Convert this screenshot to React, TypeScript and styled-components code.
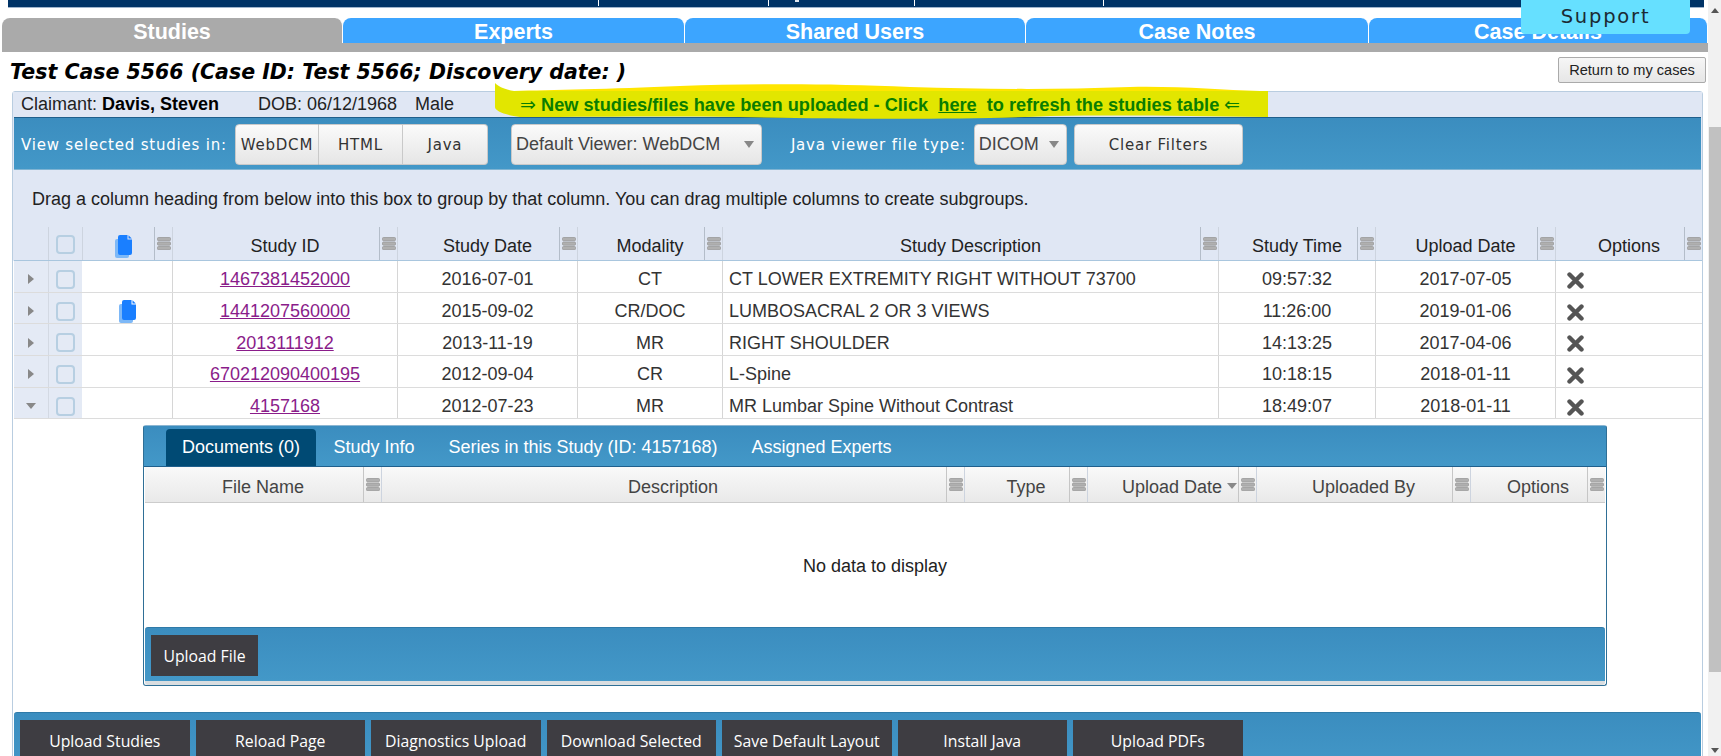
import React from 'react';
import styled, { createGlobalStyle } from 'styled-components';

const Global = createGlobalStyle`
  html, body { margin: 0; padding: 0; height: 756px; overflow: hidden; background: #fff; }
  body { font-family: "Liberation Sans", Arial, sans-serif; color: #222; }
  #root { height: 756px; }
`;

const Page = styled.div`
  position: relative;
  display: flex;
  width: 1721px;
  height: 756px;
  overflow: hidden;
`;
const Main = styled.main`
  width: 1708px;
  flex: none;
`;
const TopBar = styled.nav`
  display: flex;
  height: 7px;
  margin: 0 4px 0 8px;
  background: #003366;
  border-bottom: 1px solid #9fb4cc;
  overflow: hidden;
`;
const TopCell = styled.div<{ $w: number; $mark?: number }>`
  position: relative;
  width: ${p => p.$w}px;
  height: 6px;
  flex: none;
  border-right: 1px solid #fff;
  box-sizing: border-box;
  &::after {
    content: '';
    display: ${p => (p.$mark ? 'block' : 'none')};
    position: absolute;
    left: ${p => p.$mark}px;
    top: 0;
    width: 4px;
    height: 2px;
    background: #dfe7f0;
  }
`;
const TopRest = styled.div`flex: 1;`;

const TabStrip = styled.div`
  margin: 10px 0 0 2px;
  height: 34px;
  width: 1706px;
  background: linear-gradient(#fff 0 25px, #aaa 25px);
  display: flex;
`;
const Tab = styled.div<{ $active?: boolean; $w: number }>`
  width: ${p => p.$w}px;
  height: 25px;
  flex: none;
  box-sizing: border-box;
  border-radius: 8px 8px 0 0;
  border-right: 1px solid #fff;
  background: ${p => (p.$active ? '#aaaaaa' : '#3ca5ff')};
  color: #fff;
  font-weight: 700;
  font-size: 21.5px;
  line-height: 28px;
  text-align: center;
`;

const TitleRow = styled.div`
  display: flex;
  justify-content: space-between;
  align-items: flex-start;
  padding: 5px 2px 8px 10px;
  height: 26px;
`;
const Title = styled.h1`
  margin: 3px 0 0;
  font-family: "DejaVu Sans", sans-serif;
  font-style: italic;
  font-weight: 700;
  font-size: 20.5px;
  line-height: 24px;
  color: #000;
`;
const ReturnButton = styled.button`
  width: 148px;
  height: 26px;
  padding: 0;
  border: 1px solid #aaa;
  border-radius: 2px;
  background: linear-gradient(#f6f6f6, #e6e6e6);
  font-family: "Liberation Sans", sans-serif;
  font-size: 14.6px;
  color: #222;
`;

const Panel = styled.section`
  margin: 0 5px 0 12px;
  width: 1691px;
  box-sizing: border-box;
  background: #fff;
  border: 1px solid #b9cde0;
  border-radius: 3px 3px 0 0;
  padding: 0 0 0 1px;
`;
const PanelTop = styled.div`
  margin-left: -1px;
  background: #e0e7f4;
`;
const InfoRow = styled.div`
  display: flex;
  align-items: center;
  height: 25px;
  padding-left: 8px;
  font-size: 18px;
  color: #222;
  b { color: #000; font-weight: 700; }
`;
const InfoItem = styled.span<{ $w: number }>`
  width: ${p => p.$w}px;
  flex: none;
  white-space: nowrap;
`;
const Notice = styled.span`
  position: relative;
  z-index: 1;
  font-weight: 700;
  color: #0a7d00;
  white-space: pre;
  font-size: 18.2px;
  a { color: #0a7d00; text-decoration: underline; }
`;
const NoticeArrow = styled.span`
  font-weight: 400;
  font-size: 19px;
`;

const Toolbar = styled.div`
  display: flex;
  align-items: center;
  height: 53px;
  box-sizing: border-box;
  margin: 0 1px;
  padding: 2px 0 0 7px;
  background: linear-gradient(#3b8dbf, #4398c8);
  border-top: 1px solid #1f5f8c;
  border-bottom: 1px solid #7fb4d3;
  color: #fff;
  font-family: "DejaVu Sans", sans-serif;
  font-size: 15px;
  letter-spacing: 0.8px;
`;
const ToolLabel = styled.span<{ $ml?: number }>`
  margin-left: ${p => p.$ml ?? 0}px;
  white-space: nowrap;
`;
const Segments = styled.div`
  display: flex;
  margin-left: 8px;
`;
const Segment = styled.button<{ $w: number }>`
  width: ${p => p.$w}px;
  height: 41px;
  padding: 0;
  border: 1px solid #c9c9c9;
  border-left-width: 0;
  background: linear-gradient(#fafafa, #e6e6e6);
  font-family: "DejaVu Sans", sans-serif;
  font-size: 15px;
  letter-spacing: 0.8px;
  color: #333;
  &:first-child { border-left-width: 1px; border-radius: 4px 0 0 4px; }
  &:last-child { border-radius: 0 4px 4px 0; }
`;
const Select = styled.div<{ $w: number; $ml: number }>`
  display: flex;
  align-items: center;
  justify-content: space-between;
  width: ${p => p.$w}px;
  margin-left: ${p => p.$ml}px;
  height: 41px;
  box-sizing: border-box;
  padding: 0 7px 0 4px;
  border: 1px solid #c9c9c9;
  border-radius: 4px;
  background: linear-gradient(#fafafa, #e6e6e6);
  font-family: "Liberation Sans", sans-serif;
  font-size: 18px;
  letter-spacing: 0;
  color: #444;
  white-space: nowrap;
  &::after {
    content: '';
    border-left: 5.5px solid transparent;
    border-right: 5.5px solid transparent;
    border-top: 7px solid #888;
  }
`;
const ClearButton = styled.button`
  width: 169px;
  height: 41px;
  margin-left: 7px;
  padding: 0;
  border: 1px solid #c9c9c9;
  border-radius: 4px;
  background: linear-gradient(#fafafa, #e6e6e6);
  font-family: "DejaVu Sans", sans-serif;
  font-size: 15px;
  letter-spacing: 0.8px;
  color: #333;
`;
const GroupHint = styled.div`
  height: 57px;
  box-sizing: border-box;
  padding: 19px 0 0 19px;
  font-size: 18px;
  line-height: 20px;
  color: #222;
  white-space: nowrap;
`;

const COLS = '34px 34px 90px 225px 180px 145px 496px 157px 180px 147px';
const HeadRow = styled.div`
  display: grid;
  grid-template-columns: ${COLS};
  height: 34px;
  box-sizing: border-box;
  margin-left: 1px;
  border-bottom: 1px solid #a9c6de;
  font-size: 18px;
  color: #222;
`;
const HeadCell = styled.div`
  position: relative;
  display: flex;
  align-items: center;
  justify-content: center;
  box-sizing: border-box;
  padding-top: 5px;
  & + & { border-left: 1px solid #cdd4df; }
`;
const GripBox = styled.span`
  position: absolute;
  right: 0;
  top: 0;
  bottom: 0;
  width: 18px;
  display: flex;
  align-items: center;
  justify-content: center;
  border-left: 1px solid #b4bdc9;
  box-sizing: border-box;
`;
const NestedGripBox = styled(GripBox)`
  border-left-color: #c6c6c6;
`;

const Row = styled.div`
  display: grid;
  grid-template-columns: ${COLS};
  height: 31.7px;
  box-sizing: border-box;
  background: #fff;
  border-bottom: 1px solid #dcdcdc;
  font-size: 18px;
  color: #333;
  &:last-of-type { border-bottom: 0; }
`;
const Cell = styled.div<{ $left?: boolean }>`
  display: flex;
  align-items: center;
  justify-content: ${p => (p.$left ? 'flex-start' : 'center')};
  padding: 7px 0 0 ${p => (p.$left ? '6px' : '0')};
  border-left: 1px solid #d6d6d6;
  box-sizing: border-box;
  white-space: nowrap;
  a { color: #8a1c8a; text-decoration: underline; }
`;
const SideCell = styled.div<{ $first?: boolean }>`
  display: flex;
  align-items: center;
  justify-content: center;
  padding-top: 6px;
  box-sizing: border-box;
  background: #e4eaf5;
  ${p => (p.$first ? '' : 'border-left: 1px solid #d3d9e3;')}
`;
const FileCell = styled.div`
  display: flex;
  align-items: center;
  justify-content: center;
  padding-top: 7px;
  box-sizing: border-box;
`;
const OptionCell = styled(Cell)`
  justify-content: flex-start;
  padding: 8px 0 0 11px;
`;
const Check = styled.span`
  width: 19px;
  height: 19px;
  box-sizing: border-box;
  border: 2px solid #b7cfe2;
  border-radius: 4px;
  background: transparent;
`;
const HeadCheck = styled(Check)`
  margin-top: -4px;
`;
const Expander = styled.span<{ $open?: boolean }>`
  width: 0;
  height: 0;
  ${p =>
    p.$open
      ? `border-left: 5.5px solid transparent; border-right: 5.5px solid transparent; border-top: 6px solid #888;`
      : `border-top: 5.5px solid transparent; border-bottom: 5.5px solid transparent; border-left: 6px solid #888;`}
`;
const HeadFile = styled.span`
  display: flex;
  margin-right: 9px;
`;

const Detail = styled.div`
  margin: 6px 0 0 129px;
  width: 1464px;
  height: 261px;
  box-sizing: border-box;
  border: 1px solid #2f6f96;
  border-top-color: #8cb6d2;
  border-radius: 3px;
  background: #fff;
  padding: 0 1px 0 1px;
  display: flex;
  flex-direction: column;
`;
const DetailTabs = styled.div`
  display: flex;
  align-items: flex-end;
  height: 41px;
  flex: none;
  margin: 0 -1px;
  padding-left: 22px;
  background: linear-gradient(#3b8dbf, #4398c8);
  border-bottom: 1px solid #1f5f8c;
  box-sizing: border-box;
  font-size: 18px;
  color: #fff;
`;
const DetailTab = styled.div<{ $active?: boolean; $w: number }>`
  width: ${p => p.$w}px;
  height: 37px;
  line-height: 37px;
  text-align: center;
  white-space: nowrap;
  border-radius: 4px 4px 0 0;
  background: ${p => (p.$active ? '#004a74' : 'transparent')};
`;
const DetailHead = styled.div`
  display: grid;
  grid-template-columns: 236px 583px 123px 169px 214px 135px;
  height: 36px;
  flex: none;
  box-sizing: border-box;
  border-bottom: 1px solid #ccc;
  background: linear-gradient(#f9f9f9, #e9e9e9);
  font-size: 18px;
  color: #444;
`;
const SortArrow = styled.span`
  position: absolute;
  right: 19px;
  top: 16px;
  border-left: 5px solid transparent;
  border-right: 5px solid transparent;
  border-top: 6px solid #888;
`;
const Empty = styled.div`
  flex: 1;
  display: flex;
  align-items: center;
  justify-content: center;
  font-size: 18px;
  color: #222;
  padding-top: 3px;
`;
const DetailFoot = styled.div`
  height: 58px;
  flex: none;
  box-sizing: border-box;
  padding: 7px 0 0 6px;
  background: linear-gradient(#3b8dbf, #4398c8);
  border-top: 1px solid #2f7aa8;
  border-bottom: 4px solid #d9dde0;
  border-radius: 3px;
`;
const DarkButton = styled.button<{ $w: number }>`
  width: ${p => p.$w}px;
  height: 41px;
  padding: 0;
  border: 0;
  background: #3e3d42;
  color: #fff;
  font-family: "Open Sans", sans-serif;
  font-size: 15.8px;
  white-space: nowrap;
  flex: none;
`;
const BottomBar = styled.div`
  display: flex;
  gap: 6px;
  margin: 26px 1px 0 0;
  height: 60px;
  box-sizing: border-box;
  padding: 7px 0 0 6px;
  background: linear-gradient(#3b8dbf, #4398c8);
  border-top: 1px solid #2f7aa8;
  border-radius: 3px 3px 0 0;
`;

const Highlight = styled.svg`
  position: absolute;
  left: 490px;
  top: 80px;
  pointer-events: none;
`;
const Support = styled.div`
  position: absolute;
  left: 1521px;
  top: 0;
  width: 169px;
  height: 34px;
  background: #66e0ff;
  border-radius: 0 0 4px 4px;
  color: #1b2a33;
  font-family: "DejaVu Sans", sans-serif;
  font-size: 19.5px;
  letter-spacing: 1.8px;
  line-height: 34px;
  text-align: center;
`;
const Scrollbar = styled.div`
  position: relative;
  width: 13px;
  flex: none;
  background: #f1f1f1;
`;
const ScrollThumb = styled.div`
  position: absolute;
  left: 1px;
  right: 0;
  top: 127px;
  height: 545px;
  background: #c1c1c1;
`;
const ScrollArrow = styled.span<{ $down?: boolean }>`
  position: absolute;
  left: 3px;
  ${p => (p.$down ? 'bottom: 3px;' : 'top: 8px;')}
  border-left: 4px solid transparent;
  border-right: 4px solid transparent;
  ${p => (p.$down ? 'border-top: 5px solid #555;' : 'border-bottom: 5px solid #555;')}
`;

const Grip = () => (
  <svg width="14" height="13" viewBox="0 0 14 13">
    {[0, 4.5, 9].map(y => (
      <rect key={y} x="0.5" y={y + 0.5} width="13" height="3.2" rx="1" fill="#b0b0b0" stroke="#999" strokeWidth="0.8" />
    ))}
  </svg>
);
const FileIcon = () => (
  <svg width="17" height="23" viewBox="0 0 17 23">
    <path d="M0 6a2 2 0 0 1 2-2h8l4 4v13a2 2 0 0 1-2 2H2a2 2 0 0 1-2-2z" fill="#7db8f7" />
    <path d="M3 2a2 2 0 0 1 2-2h7.5v4.5H17V18a2 2 0 0 1-2 2H5a2 2 0 0 1-2-2z" fill="#1a7fff" />
    <path d="M13.5 0.3L16.8 3.6H13.5z" fill="#1a7fff" />
  </svg>
);
const CloseIcon = () => (
  <svg width="17" height="17" viewBox="0 0 17 17">
    <path d="M2.5 2.5L14.5 14.5M14.5 2.5L2.5 14.5" stroke="#555" strokeWidth="4.4" strokeLinecap="round" />
  </svg>
);

const rows = [
  { id: '1467381452000', date: '2016-07-01', mod: 'CT', desc: 'CT LOWER EXTREMITY RIGHT WITHOUT 73700', time: '09:57:32', up: '2017-07-05' },
  { id: '1441207560000', date: '2015-09-02', mod: 'CR/DOC', desc: 'LUMBOSACRAL 2 OR 3 VIEWS', time: '11:26:00', up: '2019-01-06', file: true },
  { id: '2013111912', date: '2013-11-19', mod: 'MR', desc: 'RIGHT SHOULDER', time: '14:13:25', up: '2017-04-06' },
  { id: '670212090400195', date: '2012-09-04', mod: 'CR', desc: 'L-Spine', time: '10:18:15', up: '2018-01-11' },
  { id: '4157168', date: '2012-07-23', mod: 'MR', desc: 'MR Lumbar Spine Without Contrast', time: '18:49:07', up: '2018-01-11', open: true },
];
const heads = ['Study ID', 'Study Date', 'Modality', 'Study Description', 'Study Time', 'Upload Date', 'Options'];
const detailHeads = ['File Name', 'Description', 'Type', 'Upload Date', 'Uploaded By', 'Options'];
const detailTabs = [
  { t: 'Documents (0)', w: 150, active: true },
  { t: 'Study Info', w: 116 },
  { t: 'Series in this Study (ID: 4157168)', w: 302 },
  { t: 'Assigned Experts', w: 175 },
];
const actions = ['Upload Studies', 'Reload Page', 'Diagnostics Upload', 'Download Selected', 'Save Default Layout', 'Install Java', 'Upload PDFs'];

export default function App() {
  return (
    <Page>
      <Global />
      <Main>
        <TopBar>
          <TopCell $w={591} />
          <TopCell $w={170} />
          <TopCell $w={146} $mark={26} />
          <TopCell $w={189} />
          <TopRest />
        </TopBar>
        <TabStrip>
          <Tab $active $w={341}>Studies</Tab>
          <Tab $w={342}>Experts</Tab>
          <Tab $w={341}>Shared Users</Tab>
          <Tab $w={343}>Case Notes</Tab>
          <Tab $w={339}>Case Details</Tab>
        </TabStrip>
        <TitleRow>
          <Title>Test Case 5566 (Case ID: Test 5566; Discovery date: )</Title>
          <ReturnButton>Return to my cases</ReturnButton>
        </TitleRow>
        <Panel>
          <PanelTop>
            <InfoRow>
              <InfoItem $w={237}>Claimant: <b>Davis, Steven</b></InfoItem>
              <InfoItem $w={157}>DOB: 06/12/1968</InfoItem>
              <InfoItem $w={105}>Male</InfoItem>
              <Notice><NoticeArrow>⇒</NoticeArrow> New studies/files have been uploaded - Click  <a>here</a>  to refresh the studies table <NoticeArrow>⇐</NoticeArrow></Notice>
            </InfoRow>
            <Toolbar>
              <ToolLabel>View selected studies in:</ToolLabel>
              <Segments>
                <Segment $w={84}>WebDCM</Segment>
                <Segment $w={84}>HTML</Segment>
                <Segment $w={85}>Java</Segment>
              </Segments>
              <Select $w={251} $ml={23}>Default Viewer: WebDCM</Select>
              <ToolLabel $ml={29}>Java viewer file type:</ToolLabel>
              <Select $w={93} $ml={8}>DICOM</Select>
              <ClearButton>Clear Filters</ClearButton>
            </Toolbar>
            <GroupHint>Drag a column heading from below into this box to group by that column. You can drag multiple columns to create subgroups.</GroupHint>
            <HeadRow>
              <HeadCell />
              <HeadCell><HeadCheck /></HeadCell>
              <HeadCell>
                <HeadFile><FileIcon /></HeadFile>
                <GripBox><Grip /></GripBox>
              </HeadCell>
              {heads.map(h => (
                <HeadCell key={h}>
                  {h}
                  <GripBox><Grip /></GripBox>
                </HeadCell>
              ))}
            </HeadRow>
          </PanelTop>
          {rows.map(r => (
            <Row key={r.id}>
              <SideCell $first><Expander $open={r.open} /></SideCell>
              <SideCell><Check /></SideCell>
              <FileCell>{r.file && <FileIcon />}</FileCell>
              <Cell><a>{r.id}</a></Cell>
              <Cell>{r.date}</Cell>
              <Cell>{r.mod}</Cell>
              <Cell $left>{r.desc}</Cell>
              <Cell>{r.time}</Cell>
              <Cell>{r.up}</Cell>
              <OptionCell><CloseIcon /></OptionCell>
            </Row>
          ))}
          <Detail>
            <DetailTabs>
              {detailTabs.map(t => (
                <DetailTab key={t.t} $w={t.w} $active={t.active}>{t.t}</DetailTab>
              ))}
            </DetailTabs>
            <DetailHead>
              {detailHeads.map(h => (
                <HeadCell key={h}>
                  {h}
                  {h === 'Upload Date' && <SortArrow />}
                  <NestedGripBox><Grip /></NestedGripBox>
                </HeadCell>
              ))}
            </DetailHead>
            <Empty>No data to display</Empty>
            <DetailFoot>
              <DarkButton $w={107}>Upload File</DarkButton>
            </DetailFoot>
          </Detail>
          <BottomBar>
            {actions.map(a => (
              <DarkButton key={a} $w={169.5}>{a}</DarkButton>
            ))}
          </BottomBar>
        </Panel>
      </Main>
      <Scrollbar>
        <ScrollArrow />
        <ScrollThumb />
        <ScrollArrow $down />
      </Scrollbar>
      <Highlight width="790" height="42" viewBox="0 0 790 42">
        <path d="M5 3C9 7 14 9 24 11H770L778 11V37C700 36 640 35 560 36C470 40 350 39 250 37C170 36 110 37 30 37C15 35 5 31 5 27Z" fill="#e2e600" />
        <path d="M5 3C9 7 14 9 24 11H770C730 10 690 6 640 7C560 10 490 9 420 7C330 3 260 4 190 6C120 9 60 10 24 11C14 9 9 7 5 3Z" fill="#ffe600" />
      </Highlight>
      <Support>Support</Support>
    </Page>
  );
}
